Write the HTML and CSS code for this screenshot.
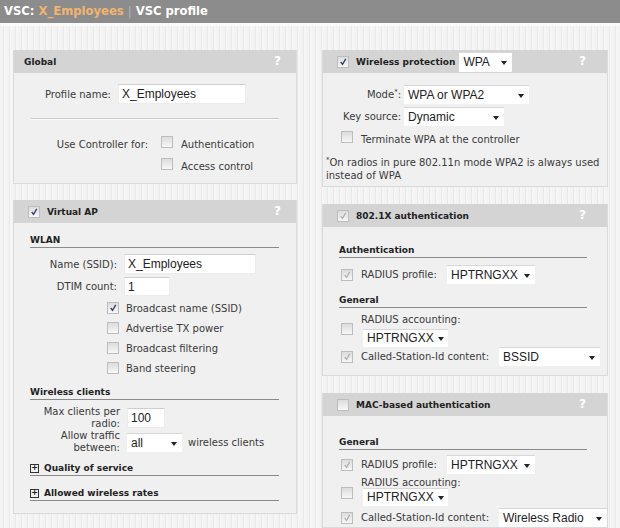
FILE: index.html
```html
<!DOCTYPE html>
<html>
<head>
    <title>VSC profile</title>
    <link rel="stylesheet" href="styles.css">
</head>
<body>
    <div class="titlebar">VSC: <span class="vsc-name">X_Employees</span> <span class="sep">|</span> VSC profile</div>

    <div class="page">
        <div class="column col-left">
            <div class="panel panel-global">
                <div class="panel-head">
                    <span class="panel-title">Global</span>
                    <span class="help">?</span>
                </div>
                <div class="panel-body">
                    <div class="row">
                        <label class="lbl lbl-global">Profile name:</label>
                        <input class="text-input w-profile" type="text" value="X_Employees">
                    </div>
                    <div class="divider"></div>
                    <div class="row cb-row">
                        <span class="lbl lbl-controller low">Use Controller for:</span>
                        <span class="cb"></span>
                        <span class="cb-text low">Authentication</span>
                    </div>
                    <div class="row cb-row indent-controller">
                        <span class="cb"></span>
                        <span class="cb-text low">Access control</span>
                    </div>
                </div>
            </div>

            <div class="panel panel-vap">
                <div class="panel-head">
                    <span class="cb checked"><svg viewBox="0 0 11 11"><path d="M3 5.5 L5 8 L8.5 2"/></svg></span>
                    <span class="panel-title">Virtual AP</span>
                    <span class="help">?</span>
                </div>
                <div class="panel-body">
                    <div class="section-head">WLAN</div>
                    <div class="row row-name">
                        <label class="lbl lbl-vap">Name (SSID):</label>
                        <input class="text-input w-ssid" type="text" value="X_Employees">
                    </div>
                    <div class="row row-dtim">
                        <label class="lbl lbl-vap">DTIM count:</label>
                        <input class="text-input w-dtim" type="text" value="1">
                    </div>
                    <div class="cb-list">
                        <div class="row cb-row">
                            <span class="cb checked"><svg viewBox="0 0 11 11"><path d="M3 5.5 L5 8 L8.5 2"/></svg></span>
                            <span class="cb-text">Broadcast name (SSID)</span>
                        </div>
                        <div class="row cb-row">
                            <span class="cb"></span>
                            <span class="cb-text">Advertise TX power</span>
                        </div>
                        <div class="row cb-row">
                            <span class="cb"></span>
                            <span class="cb-text">Broadcast filtering</span>
                        </div>
                        <div class="row cb-row">
                            <span class="cb"></span>
                            <span class="cb-text">Band steering</span>
                        </div>
                    </div>
                    <div class="section-head">Wireless clients</div>
                    <div class="row row-two">
                        <label class="lbl lbl-clients">Max clients per<br>radio:</label>
                        <input class="text-input w-max" type="text" value="100">
                    </div>
                    <div class="row row-two">
                        <label class="lbl lbl-clients">Allow traffic<br>between:</label>
                        <div class="select w-all">all<span class="caret"></span></div>
                        <span class="after-text">wireless clients</span>
                    </div>
                    <div class="section-head expander"><span class="plus">+</span>Quality of service</div>
                    <div class="section-head expander last"><span class="plus">+</span>Allowed wireless rates</div>
                </div>
            </div>
        </div>

        <div class="column col-right">
            <div class="panel panel-wpa">
                <div class="panel-head">
                    <span class="cb checked"><svg viewBox="0 0 11 11"><path d="M3 5.5 L5 8 L8.5 2"/></svg></span>
                    <span class="panel-title">Wireless protection</span>
                    <div class="select w-wpa head-select">WPA<span class="caret"></span></div>
                    <span class="help">?</span>
                </div>
                <div class="panel-body">
                    <div class="row row-mode">
                        <label class="lbl lbl-wpa">Mode<sup>*</sup>:</label>
                        <div class="select w-mode">WPA or WPA2<span class="caret"></span></div>
                    </div>
                    <div class="row row-key">
                        <label class="lbl lbl-wpa">Key source:</label>
                        <div class="select w-key">Dynamic<span class="caret"></span></div>
                    </div>
                    <div class="row cb-row indent-right">
                        <span class="cb"></span>
                        <span class="cb-text low">Terminate WPA at the controller</span>
                    </div>
                    <p class="footnote"><sup>*</sup>On radios in pure 802.11n mode WPA2 is always used instead of WPA</p>
                </div>
            </div>

            <div class="panel panel-dot1x">
                <div class="panel-head">
                    <span class="cb checked dim"><svg viewBox="0 0 11 11"><path d="M3 5.5 L5 8 L8.5 2"/></svg></span>
                    <span class="panel-title">802.1X authentication</span>
                    <span class="help">?</span>
                </div>
                <div class="panel-body">
                    <div class="section-head">Authentication</div>
                    <div class="row row-radius indent-right">
                        <span class="cb checked dim"><svg viewBox="0 0 11 11"><path d="M3 5.5 L5 8 L8.5 2"/></svg></span>
                        <span class="cb-text lbl-radius">RADIUS profile:</span>
                        <div class="select w-hp">HPTRNGXX<span class="caret"></span></div>
                    </div>
                    <div class="section-head">General</div>
                    <div class="row row-acct indent-right">
                        <span class="cb"></span>
                        <div class="acct">
                            <span class="acct-label">RADIUS accounting:</span>
                            <div class="select w-hp2">HPTRNGXX<span class="caret"></span></div>
                        </div>
                    </div>
                    <div class="row row-called indent-right">
                        <span class="cb checked dim"><svg viewBox="0 0 11 11"><path d="M3 5.5 L5 8 L8.5 2"/></svg></span>
                        <span class="cb-text lbl-called">Called-Station-Id content:</span>
                        <div class="select w-called">BSSID<span class="caret"></span></div>
                    </div>
                </div>
            </div>

            <div class="panel panel-mac">
                <div class="panel-head">
                    <span class="cb"></span>
                    <span class="panel-title">MAC-based authentication</span>
                    <span class="help">?</span>
                </div>
                <div class="panel-body">
                    <div class="section-head">General</div>
                    <div class="row row-radius indent-right">
                        <span class="cb checked dim"><svg viewBox="0 0 11 11"><path d="M3 5.5 L5 8 L8.5 2"/></svg></span>
                        <span class="cb-text lbl-radius">RADIUS profile:</span>
                        <div class="select w-hp">HPTRNGXX<span class="caret"></span></div>
                    </div>
                    <div class="row row-acct indent-right">
                        <span class="cb"></span>
                        <div class="acct">
                            <span class="acct-label">RADIUS accounting:</span>
                            <div class="select w-hp2">HPTRNGXX<span class="caret"></span></div>
                        </div>
                    </div>
                    <div class="row row-called indent-right">
                        <span class="cb checked dim"><svg viewBox="0 0 11 11"><path d="M3 5.5 L5 8 L8.5 2"/></svg></span>
                        <span class="cb-text lbl-called">Called-Station-Id content:</span>
                        <div class="select w-called2">Wireless Radio<span class="caret"></span></div>
                    </div>
                </div>
            </div>
        </div>
    </div>
</body>
</html>
```

FILE: styles.css
```css
body {
    margin: 0;
    font-family: "DejaVu Sans", Verdana, sans-serif;
    font-size: 10px;
    color: #3a3a3a;
    background-color: #f1f1f1;
    overflow: hidden;
}
.titlebar {
    height: 23px;
    line-height: 23px;
    padding-left: 4px;
    background-color: #8c8c8c;
    color: #fff;
    font-weight: bold;
    font-size: 11.6px;
    white-space: nowrap;
}
.vsc-name {
    color: #f2b46e;
}
.sep {
    color: #b4b4b4;
    font-weight: normal;
}
.page {
    display: grid;
    grid-template-columns: 284px 286px;
    column-gap: 25px;
    padding: 24px 0 0 13px;
    border-top: 3px solid #fafafa;
    min-height: 600px;
    background: repeating-linear-gradient(90deg, #f3f3f3 0 3px, #e9e9e9 3px 4px, #f6f6f6 4px 6px);
}
.column {
    display: flex;
    flex-direction: column;
}

/* panels */
.panel {
    background-color: #f0f0f0;
    border: 1px solid #dadada;
    border-top: none;
}
.panel-head {
    display: flex;
    align-items: center;
    height: 23px;
    padding: 0 0 0 10px;
    background-color: #d4d4d4;
    position: relative;
}
.panel-head .cb {
    margin: 0 7px 0 4px;
}
.panel-title {
    font-weight: bold;
    font-size: 9px;
    color: #222;
}
.help {
    position: absolute;
    top: 4px;
    color: #fff;
    font-weight: bold;
    font-size: 12px;
}
.col-left .help {
    right: 15px;
}
.col-right .help {
    right: 21px;
}
.panel-vap {
    margin-top: 16px;
}
.panel-dot1x {
    margin-top: 17px;
}
.panel-mac {
    margin-top: 17px;
}

.panel-global .panel-body {
    padding: 11px 0 8px;
}
.panel-vap .panel-body {
    padding: 11px 0 12px;
}
.panel-wpa .panel-body {
    padding: 12px 0 4px;
}
.panel-dot1x .panel-body {
    padding: 17px 0 9px;
}
.panel-mac .panel-body {
    padding: 20px 0 0;
}

/* rows */
.row {
    display: flex;
    align-items: center;
}
.lbl {
    text-align: right;
    flex: none;
}
.lbl-global {
    width: 97px;
    margin-right: 7px;
}
.lbl-controller {
    width: 134px;
    margin-right: 13px;
}
.indent-controller {
    padding-left: 147px;
}
.lbl-vap {
    width: 103px;
    margin-right: 7px;
}
.lbl-clients {
    width: 106px;
    margin-right: 7px;
    line-height: 12px;
}
.lbl-wpa {
    width: 78px;
    margin-right: 3px;
}
.lbl-wpa sup {
    font-size: 7px;
    line-height: 0;
}
.cb-row {
    height: 22px;
}
.cb-text {
    margin-left: 8px;
}
.low {
    margin-top: 4px;
}

.divider {
    height: 1px;
    background-color: #c9c9c9;
    margin: 14px 17px 11px;
    border-bottom: 1px solid #fbfbfb;
}

/* inputs */
.text-input {
    box-sizing: border-box;
    height: 20px;
    margin: 0;
    padding: 0 3px;
    border: 1px solid #ececec;
    border-top-color: #cfcfcf;
    background-color: #fff;
    font-family: "Liberation Sans", Arial, sans-serif;
    font-size: 12px;
    color: #222;
}
.w-profile {
    width: 128px;
}
.w-ssid {
    width: 132px;
}
.w-dtim {
    width: 46px;
    height: 19px;
}
.w-max {
    width: 38px;
}

.select {
    box-sizing: border-box;
    position: relative;
    height: 19px;
    line-height: 18px;
    padding: 0 0 0 4px;
    background-color: #fff;
    border-top: 1px solid #d8d8d8;
    font-family: "Liberation Sans", Arial, sans-serif;
    font-size: 12px;
    color: #222;
    flex: none;
}
.caret {
    position: absolute;
    right: 5px;
    top: 8px;
    border-left: 3px solid transparent;
    border-right: 3px solid transparent;
    border-top: 4px solid #222;
}
.w-wpa {
    width: 53px;
    height: 20px;
    line-height: 19px;
}
.head-select {
    margin-left: 4px;
}
.w-mode {
    width: 125px;
}
.w-key {
    width: 100px;
}
.w-all {
    width: 55px;
}
.w-hp {
    width: 88px;
}
.w-hp2 {
    width: 85px;
    height: 18px;
    line-height: 17px;
}
.w-hp2 .caret {
    right: 4px;
    top: 7px;
}
.w-called {
    width: 101px;
}
.w-called2 {
    width: 108px;
}
.after-text {
    margin-left: 6px;
}

/* checkboxes */
.cb {
    box-sizing: border-box;
    display: inline-block;
    flex: none;
    width: 12px;
    height: 12px;
    border: 1px solid #bdbdbd;
    background: linear-gradient(#dcdcdc, #f7f7f7);
}
.cb svg {
    display: block;
    width: 10px;
    height: 10px;
}
.cb svg path {
    fill: none;
    stroke: #2d3a66;
    stroke-width: 1.4;
}
.cb.dim svg path {
    stroke: #b0b0b0;
}

/* virtual AP */
.section-head {
    margin: 0 17px 0 16px;
    padding-bottom: 1px;
    border-bottom: 1px solid #8a8a8a;
    font-weight: bold;
    font-size: 9px;
    color: #222;
    line-height: 12px;
}
.row-name {
    margin-top: 6px;
}
.row-dtim {
    margin-top: 3px;
}
.cb-list {
    padding: 2px 0 0 93px;
    margin-bottom: 8px;
}
.cb-list .cb-row {
    height: 20px;
}
.cb-list .cb-text {
    margin-left: 7px;
}
.row-two {
    height: 24px;
    margin-top: 6px;
}
.row-two + .row-two {
    margin-top: 0;
}
.expander {
    display: flex;
    align-items: center;
    margin-top: 8px;
}
.expander.last {
    margin-top: 11px;
}
.plus {
    box-sizing: border-box;
    width: 9px;
    height: 9px;
    margin: 0 5px 0 0;
    border: 1px solid #333;
    font-size: 8px;
    line-height: 6px;
    text-align: center;
}

/* right column */
.row-key {
    margin-top: 3px;
}
.indent-right {
    padding-left: 18px;
}
.footnote {
    margin: 8px 0 0 3px;
    line-height: 13px;
}
.footnote sup {
    font-size: 7px;
    line-height: 0;
}
.panel-dot1x .section-head,
.panel-mac .section-head {
    margin: 0 20px 0 16px;
}
.row-radius {
    margin: 7px 0 10px;
}
.lbl-radius {
    width: 86px;
    margin-left: 8px;
}
.row-acct {
    margin-top: 6px;
    align-items: flex-start;
}
.row-acct .cb {
    margin-top: 9px;
}
.acct {
    display: flex;
    flex-direction: column;
    gap: 3px;
    margin-left: 10px;
}
.acct-label {
    line-height: 12px;
    margin-left: -2px;
}
.lbl-called {
    width: 138px;
    margin-left: 8px;
}
.panel-mac .row-radius {
    margin: 5px 0 2px;
}
.panel-mac .row-acct {
    margin-top: 4px;
}
.panel-mac .acct {
    gap: 0;
}
.panel-mac .acct-label {
    line-height: 10px;
}
.panel-mac .row-called {
    margin-top: 2px;
}
```
